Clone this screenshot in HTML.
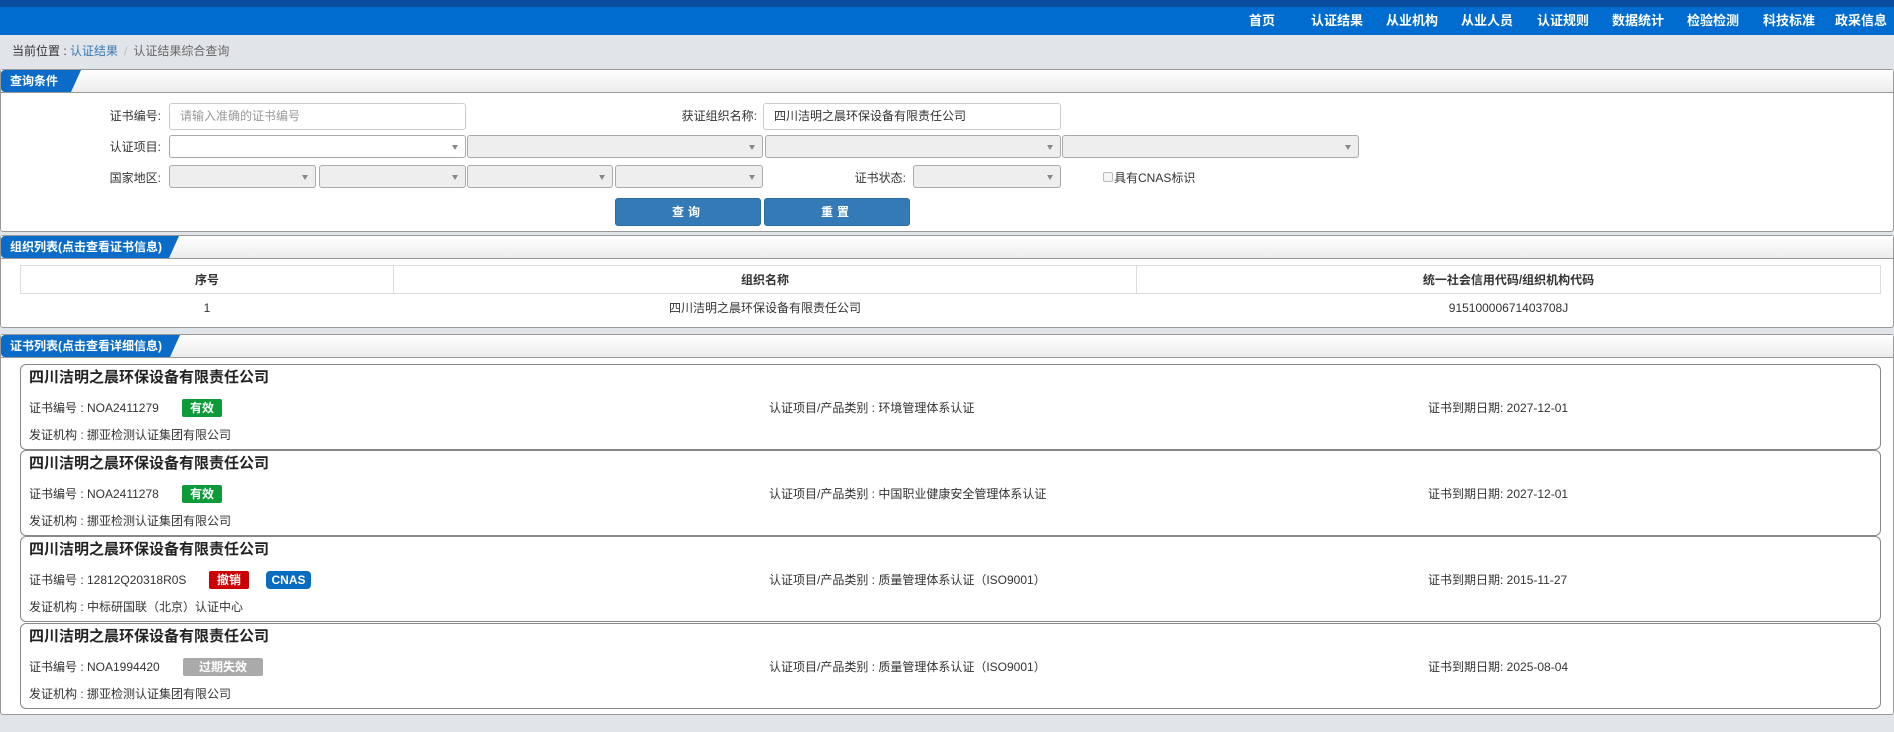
<!DOCTYPE html>
<html><head><meta charset="utf-8">
<style>
*{box-sizing:border-box;margin:0;padding:0}
body{width:1894px;height:732px;background:#e1e5e9;font-family:"Liberation Sans","Noto Sans CJK SC",sans-serif;font-size:12px;color:#333;position:relative;overflow:hidden}
.a{position:absolute}
.top{left:0;top:0;width:1894px;height:7px;background:#0a4d9c}
.nav{left:0;top:7px;width:1894px;height:28px;background:#006ccf}
.nav span{position:absolute;top:3px;color:#fff;font-weight:bold;font-size:13px;transform:translateX(-50%);white-space:nowrap}
.bc{left:12px;top:42px;font-size:12px;color:#333}
.bc .l{color:#3b78b4}.bc .s{color:#bbb;margin:0 6px}.bc .g{color:#666}
.panel{left:0;width:1894px;background:#fff;border:1px solid #999;border-radius:3px}
.ph{position:absolute;left:0;top:0;right:0;height:23px;background:linear-gradient(#fff,#ececec);border-bottom:1px solid #999}
.tab{position:absolute;left:0;top:0;height:22px;background:#0a6cc8;color:#fff;font-weight:bold;font-size:12px;line-height:22px;padding-left:9px;clip-path:polygon(0 0,100% 0,calc(100% - 10px) 100%,0 100%);border-radius:4px 0 0 4px}
.lab{position:absolute;text-align:right;font-size:12px;color:#333}
.inp{position:absolute;height:27px;border:1px solid #ccc;border-radius:3px;background:#fff;font-size:12px;line-height:25px;padding-left:10px}
.sel{position:absolute;height:23px;border:1px solid #aaa;border-radius:3px;background:#eee}
.sel.w{background:#fff}
.sel:after{content:"";position:absolute;right:7px;top:9px;border-left:3px solid transparent;border-right:3px solid transparent;border-top:5px solid #888}
.btn{position:absolute;top:198px;height:28px;background:#337ab7;border:1px solid #2e6da4;border-radius:3px;color:#fff;font-weight:bold;text-align:center;line-height:26px;letter-spacing:4px}
table{position:absolute;left:20px;top:265px;width:1861px;border-collapse:collapse}
td,th{border:1px solid #ddd;text-align:center;font-size:12px;height:28px;line-height:14px}
th{font-weight:bold}
.row2 td{border:none;height:28px}
.card{position:absolute;left:20px;width:1861px;height:86px;border:1px solid #888;border-radius:6px;background:#fff;line-height:1.2}
.card .t{position:absolute;left:8px;top:4px;font-size:15px;font-weight:bold;color:#222}
.card .n{position:absolute;left:8px;top:36px}
.card .o{position:absolute;left:8px;top:63px}
.card .p{position:absolute;left:748px;top:36px}
.card .d{position:absolute;left:1407px;top:36px}
.bd{position:absolute;top:34px;height:18px;color:#fff;font-weight:bold;font-size:12px;line-height:18px;text-align:center;border-radius:2px}
</style></head><body>
<div class="a top"></div>
<div class="a nav">
<span style="left:1262px">首页</span><span style="left:1337px">认证结果</span><span style="left:1412px">从业机构</span><span style="left:1487px">从业人员</span><span style="left:1563px">认证规则</span><span style="left:1638px">数据统计</span><span style="left:1713px">检验检测</span><span style="left:1789px">科技标准</span><span style="left:1861px">政采信息</span>
</div>
<div class="a bc">当前位置 : <span class="l">认证结果</span><span class="s">/</span><span class="g">认证结果综合查询</span></div>

<div class="a panel" style="top:69px;height:163px">
<div class="ph"><div class="tab" style="width:80px">查询条件</div></div>
</div>
<div class="lab" style="left:80px;top:107px;width:81px">证书编号:</div>
<div class="inp" style="left:169px;top:103px;width:297px;color:#999">请输入准确的证书编号</div>
<div class="lab" style="left:650px;top:107px;width:107px">获证组织名称:</div>
<div class="inp" style="left:763px;top:103px;width:298px;color:#333">四川洁明之晨环保设备有限责任公司</div>
<div class="lab" style="left:80px;top:138px;width:81px">认证项目:</div>
<div class="sel w" style="left:169px;top:135px;width:297px"></div>
<div class="sel" style="left:467px;top:135px;width:296px"></div>
<div class="sel" style="left:765px;top:135px;width:296px"></div>
<div class="sel" style="left:1062px;top:135px;width:297px"></div>
<div class="lab" style="left:80px;top:169px;width:81px">国家地区:</div>
<div class="sel" style="left:169px;top:165px;width:147px"></div>
<div class="sel" style="left:319px;top:165px;width:147px"></div>
<div class="sel" style="left:467px;top:165px;width:146px"></div>
<div class="sel" style="left:615px;top:165px;width:148px"></div>
<div class="lab" style="left:840px;top:169px;width:66px">证书状态:</div>
<div class="sel" style="left:913px;top:165px;width:148px"></div>
<div class="a" style="left:1103px;top:172px;width:10px;height:10px;border:1px solid #bbb;border-radius:2px;background:#f5f5f5"></div>
<div class="a" style="left:1114px;top:169px;font-size:12px">具有CNAS标识</div>
<div class="btn" style="left:615px;width:146px">查询</div>
<div class="btn" style="left:764px;width:146px">重置</div>

<div class="a panel" style="top:235px;height:93px">
<div class="ph"><div class="tab" style="width:178px">组织列表(点击查看证书信息)</div></div>
</div>
<table>
<tr><th style="width:373px">序号</th><th style="width:743px">组织名称</th><th>统一社会信用代码/组织机构代码</th></tr>
<tr class="row2"><td>1</td><td>四川洁明之晨环保设备有限责任公司</td><td>91510000671403708J</td></tr>
</table>

<div class="a panel" style="top:334px;height:381px">
<div class="ph"><div class="tab" style="width:179px">证书列表(点击查看详细信息)</div></div>
</div>
<div class="card" style="top:364px">
<div class="t">四川洁明之晨环保设备有限责任公司</div>
<div class="n">证书编号 : NOA2411279</div><div class="bd" style="left:161px;width:40px;background:#0d9a39">有效</div>
<div class="p">认证项目/产品类别 : 环境管理体系认证</div><div class="d">证书到期日期: 2027-12-01</div>
<div class="o">发证机构 : 挪亚检测认证集团有限公司</div></div>
<div class="card" style="top:450px">
<div class="t">四川洁明之晨环保设备有限责任公司</div>
<div class="n">证书编号 : NOA2411278</div><div class="bd" style="left:161px;width:40px;background:#0d9a39">有效</div>
<div class="p">认证项目/产品类别 : 中国职业健康安全管理体系认证</div><div class="d">证书到期日期: 2027-12-01</div>
<div class="o">发证机构 : 挪亚检测认证集团有限公司</div></div>
<div class="card" style="top:536px">
<div class="t">四川洁明之晨环保设备有限责任公司</div>
<div class="n">证书编号 : 12812Q20318R0S</div><div class="bd" style="left:188px;width:40px;background:#cc0000">撤销</div><div class="bd" style="left:245px;width:45px;background:#0a6cc0;border-radius:4px">CNAS</div>
<div class="p">认证项目/产品类别 : 质量管理体系认证（ISO9001）</div><div class="d">证书到期日期: 2015-11-27</div>
<div class="o">发证机构 : 中标研国联（北京）认证中心</div></div>
<div class="card" style="top:623px">
<div class="t">四川洁明之晨环保设备有限责任公司</div>
<div class="n">证书编号 : NOA1994420</div><div class="bd" style="left:162px;width:80px;background:#aaa">过期失效</div>
<div class="p">认证项目/产品类别 : 质量管理体系认证（ISO9001）</div><div class="d">证书到期日期: 2025-08-04</div>
<div class="o">发证机构 : 挪亚检测认证集团有限公司</div></div>
</body></html>
